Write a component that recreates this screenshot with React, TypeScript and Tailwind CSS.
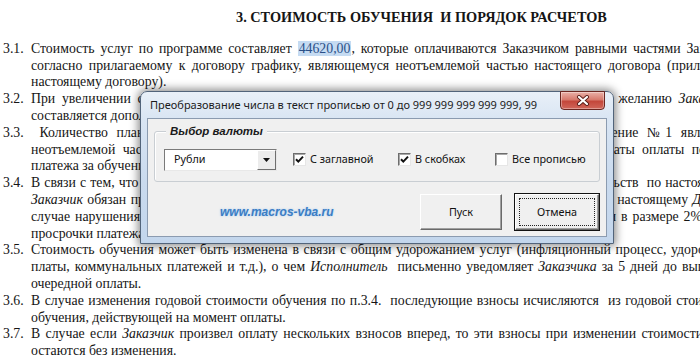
import React from "react";

const Row = ({ n, children, cls = "" }: { n: string; children: React.ReactNode; cls?: string }) => (
  <div className="flex whitespace-nowrap">
    <span className="w-[31px] shrink-0 pl-[3px]">{n}</span>
    <span className={"block shrink-0 " + cls}>{children}</span>
  </div>
);

const Cont = ({ children, cls = "" }: { children: React.ReactNode; cls?: string }) => (
  <div className="flex whitespace-nowrap pl-[31px]">
    <span className={"block shrink-0 " + cls}>{children}</span>
  </div>
);

const Check = ({ checked }: { checked: boolean }) => (
  <div className="relative w-[13px] h-[13px] shrink-0 bg-white border border-t-[#6d6d6d] border-l-[#6d6d6d] border-b-[#e6e6e6] border-r-[#e6e6e6] shadow-[inset_1px_1px_0_#a8a8a8]">
    {checked && (
      <svg viewBox="0 0 11 11" className="absolute left-0 top-0 w-[11px] h-[11px]">
        <path d="M2 5.2 L4.3 7.6 L9 2.6" fill="none" stroke="#111" strokeWidth="2" />
      </svg>
    )}
  </div>
);

export default function App() {
  return (
    <div className="relative w-[700px] h-[360px] overflow-hidden bg-white">
      <div className="pt-[9px] font-['Liberation_Serif',serif] text-[13.8px] leading-[16.8px] text-[#151515]">
        <div className="pl-[236px] font-bold text-[14.3px] mb-[15px] whitespace-nowrap">3. СТОИМОСТЬ ОБУЧЕНИЯ&nbsp; И ПОРЯДОК РАСЧЕТОВ</div>
        <Row n="3.1." cls="w-[714px] text-justify [text-align-last:justify]">
          Стоимость услуг по программе составляет{" "}
          <span className="bg-[#c5dbf2] text-[#2a4f88] px-[1px]">44620,00</span>, которые оплачиваются Заказчиком равными частями Заказчику
        </Row>
        <Cont cls="w-[712px] text-justify [text-align-last:justify]">
          согласно прилагаемому к договору графику, являющемуся неотъемлемой частью настоящего договора (приложение
        </Cont>
        <Cont>настоящему договору).</Cont>
        <Row n="3.2." cls="w-[706px] text-justify [text-align-last:justify]">
          При увеличении стоимости обучения в течение учебного года между сторонами договора по желанию <i>Заказчика</i>
        </Row>
        <Cont>составляется дополнительное соглашение к договору.</Cont>
        <Row n="3.3." cls="w-[724px] text-justify [text-align-last:justify]">
          &nbsp;Количество плановых платежей, их размер и сроки внесения оплаты указаны в Приложение №1 являющемся
        </Row>
        <Cont cls="w-[675px] text-justify [text-align-last:justify]">
          неотъемлемой частью настоящего договора. Порядок внесения платежей, а также сроки и даты оплаты по
        </Cont>
        <Cont>платежа за обучение указаны в Приложении №1.</Cont>
        <Row n="3.4." cls="w-[705px] text-justify [text-align-last:justify]">
          В связи с тем, что Исполнитель несет все расходы заранее для надлежащего исполнения обязательств&nbsp; по настоящему
        </Row>
        <Cont cls="w-[715px] text-justify [text-align-last:justify]">
          <i>Заказчик</i> обязан производить оплату услуг Исполнителя в сроки, установленные в приложении к настоящему <i>Договору</i>
        </Cont>
        <Cont cls="w-[671px] text-justify [text-align-last:justify]">
          случае нарушения сроков оплаты, указанных в графике, Заказчик уплачивает Исполнителю пени в размере 2%
        </Cont>
        <Cont>просрочки платежа за каждый день.</Cont>
        <Row n="3.5." cls="w-[710px] text-justify [text-align-last:justify]">
          Стоимость обучения может быть изменена в связи с общим удорожанием услуг (инфляционный процесс, удорожание
        </Row>
        <Cont cls="w-[702px] text-justify [text-align-last:justify]">
          платы, коммунальных платежей и т.д.), о чем <i>Исполнитель</i>&nbsp; письменно уведомляет <i>Заказчика</i> за 5 дней до выплаты
        </Cont>
        <Cont>очередной оплаты.</Cont>
        <Row n="3.6." cls="w-[707px] text-justify [text-align-last:justify]">
          В случае изменения годовой стоимости обучения по п.3.4.&nbsp; последующие взносы исчисляются&nbsp; из годовой стоимости
        </Row>
        <Cont>обучения, действующей на момент оплаты.</Cont>
        <Row n="3.7." cls="w-[732px] text-justify [text-align-last:justify]">
          В случае если <i>Заказчик</i> произвел оплату нескольких взносов вперед, то эти взносы при изменении стоимости обучения
        </Row>
        <Cont>остаются без изменения.</Cont>
      </div>

      {/* Dialog window */}
      <div className="absolute left-[140px] top-[91px] w-[474px] h-[153px] rounded-t-[7px] border border-[#52647a] bg-[linear-gradient(180deg,#e9f0f8_0%,#d9e5f3_18%,#c9daee_60%,#c3d6ec_100%)] shadow-[0_0_9px_2px_rgba(0,0,0,0.45)] flex flex-col">
        <div className="h-[26px] shrink-0 flex items-center pl-[9px] font-['Noto_Sans',sans-serif] text-[11px] text-[#1c1c1c] whitespace-nowrap">
          Преобразование числа в текст прописью от 0 до 999 999 999 999 999, 99
        </div>
        <div className="absolute right-[8px] top-[-1px] w-[45px] h-[19px] rounded-b-[4px] border border-[#6b2620] bg-[linear-gradient(180deg,#eab1a8_0%,#d77a6d_45%,#c4473b_55%,#d0665a_100%)] shadow-[inset_0_0_0_1px_rgba(255,255,255,0.35)] flex items-center justify-center">
          <svg viewBox="0 0 14 11" className="w-[14px] h-[11px]">
            <path d="M3 2 L11 9 M11 2 L3 9" stroke="#5a1d18" strokeWidth="4" strokeLinecap="round" />
            <path d="M3 2 L11 9 M11 2 L3 9" stroke="#ffffff" strokeWidth="2.2" strokeLinecap="round" />
          </svg>
        </div>
        <div className="mx-[6px] mb-[6px] flex-1 border border-[#8b9bb0] bg-[#f0f0f0] px-[6px] pt-[12px] flex flex-col font-['Noto_Sans',sans-serif] text-[10.8px] text-[#111]">
          <div className="relative h-[51px] rounded-[3px] border border-[#c9ced3] shadow-[inset_1px_1px_0_#ffffff] flex items-center pl-[9px] pt-[6px]">
            <div className="absolute left-[11px] top-[-9px] px-[4px] bg-[#f0f0f0] font-['Liberation_Sans',sans-serif] font-bold italic text-[11.5px] text-[#1a1a1a] leading-[16px]">
              Выбор валюты
            </div>
            <div className="w-[113px] h-[22px] flex bg-white border border-t-[#7a7a7a] border-l-[#7a7a7a] border-b-[#e8e8e8] border-r-[#e8e8e8]">
              <div className="flex-1 flex items-center pl-[9px]">Рубли</div>
              <div className="w-[19px] h-full flex items-center justify-center bg-[#ececec] border border-t-[#ffffff] border-l-[#ffffff] border-b-[#6f6f6f] border-r-[#6f6f6f]">
                <svg viewBox="0 0 7 4" className="w-[7px] h-[4px]">
                  <path d="M0 0 L7 0 L3.5 4 Z" fill="#111" />
                </svg>
              </div>
            </div>
            <div className="w-[16px]" />
            <div className="w-[105px] flex items-center gap-[4px]">
              <Check checked />
              <span>С заглавной</span>
            </div>
            <div className="w-[97px] flex items-center gap-[4px]">
              <Check checked />
              <span>В скобках</span>
            </div>
            <div className="flex items-center gap-[4px]">
              <Check checked={false} />
              <span>Все прописью</span>
            </div>
          </div>
          <div className="mt-[11px] h-[38px] flex items-center">
            <div className="ml-[66px] font-['Liberation_Sans',sans-serif] font-bold italic text-[12px] text-[#3b7dc4] [text-shadow:0_0_2px_rgba(140,190,240,0.8)]">
              www.macros-vba.ru
            </div>
            <div className="ml-auto flex items-center gap-[12px]">
              <div className="w-[82px] h-[36px] flex items-center justify-center bg-[#f0f0f0] border border-t-[#ffffff] border-l-[#ffffff] border-b-[#6a6a6a] border-r-[#6a6a6a] shadow-[inset_-1px_-1px_0_#a0a0a0]">
                Пуск
              </div>
              <div className="relative w-[86px] h-[38px] border border-[#111] bg-[#f0f0f0]">
                <div className="absolute inset-0 border border-t-[#ffffff] border-l-[#ffffff] border-b-[#6a6a6a] border-r-[#6a6a6a] shadow-[inset_-1px_-1px_0_#a0a0a0] flex items-center justify-center">
                  Отмена
                </div>
                <div className="absolute inset-[4px] border border-dotted border-[#222]" />
              </div>
            </div>
          </div>
        </div>
      </div>
    </div>
  );
}
